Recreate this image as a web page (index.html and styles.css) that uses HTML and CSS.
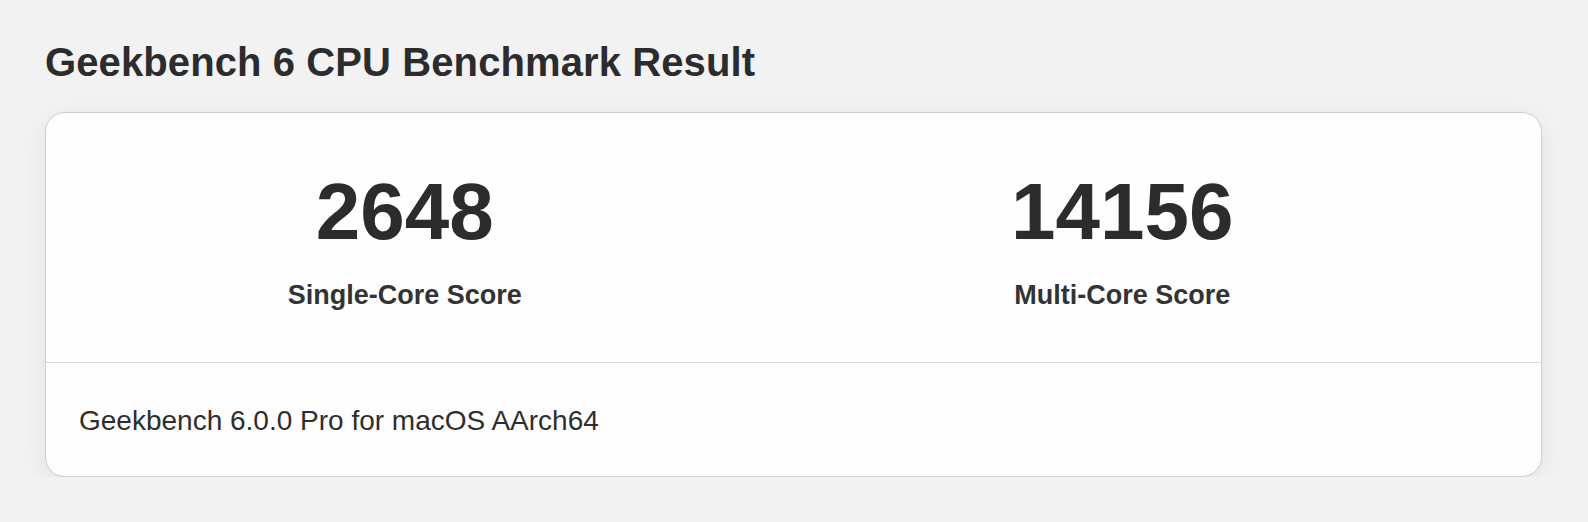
FILE: index.html
```html
<!DOCTYPE html>
<html lang="en">
<head>
    <meta charset="UTF-8">
    <meta name="viewport" content="width=device-width, initial-scale=1.0">
    <title>Geekbench 6 CPU Benchmark Result</title>
    <link rel="stylesheet" href="styles.css">
</head>
<body>
    <h1 class="page-title">Geekbench 6 CPU Benchmark Result</h1>
    <div class="result-card">
        <div class="scores">
            <div class="score">
                <div class="score-value">2648</div>
                <div class="score-label">Single-Core Score</div>
            </div>
            <div class="score">
                <div class="score-value">14156</div>
                <div class="score-label">Multi-Core Score</div>
            </div>
        </div>
        <div class="card-footer">Geekbench 6.0.0 Pro for macOS AArch64</div>
    </div>
</body>
</html>
```

FILE: styles.css
```css
* {
    box-sizing: border-box;
    font-family: "Liberation Sans", Arial, sans-serif;
}
body {
    margin: 0;
    padding: 38px 46px 0 45px;
    background: #f2f2f2;
    color: #2c2c2e;
}
.page-title {
    margin: 0;
    font-size: 40px;
    line-height: 48px;
    font-weight: bold;
    letter-spacing: 0.1px;
}
.result-card {
    margin-top: 26px;
    background: #fefefe;
    border: 1px solid #cecece;
    border-radius: 20px;
    box-shadow: 0 6px 24px rgba(0, 0, 0, 0.07);
}
.scores {
    display: grid;
    grid-template-columns: 1fr 1fr;
    padding: 59px 60px 51px 0;
}
.score {
    display: flex;
    flex-direction: column;
    align-items: center;
    gap: 27px;
}
.score-value {
    font-size: 80px;
    line-height: 80px;
    font-weight: bold;
}
.score-label {
    font-size: 27px;
    line-height: 32px;
    font-weight: bold;
    color: #333335;
}
.card-footer {
    border-top: 1px solid #dcdcdc;
    padding: 42px 33px 39px;
    font-size: 28px;
    line-height: 32px;
    color: #2e2e2e;
}
```
